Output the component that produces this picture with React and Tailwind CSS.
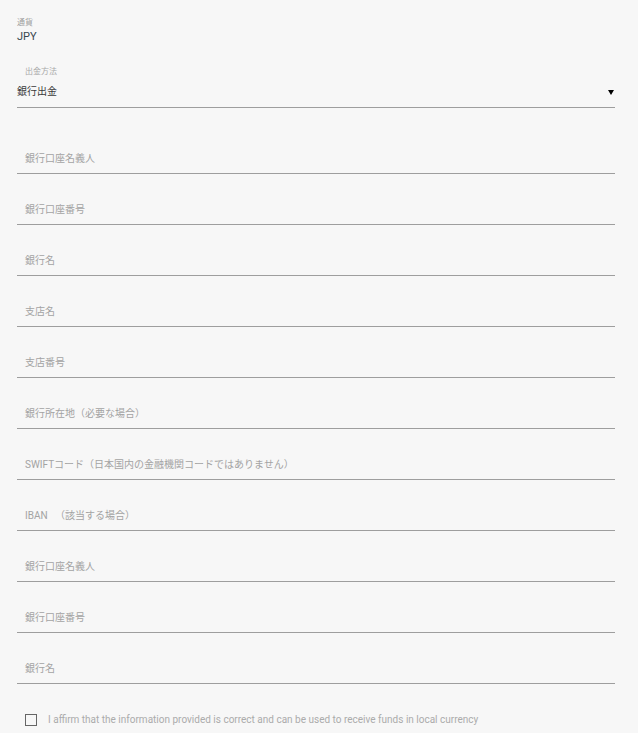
import React from 'react'

const fields = [
  '銀行口座名義人',
  '銀行口座番号',
  '銀行名',
  '支店名',
  '支店番号',
  '銀行所在地（必要な場合）',
  'SWIFTコード（日本国内の金融機関コードではありません）',
  'IBAN 　（該当する場合）',
  '銀行口座名義人',
  '銀行口座番号',
  '銀行名',
]

export default function App() {
  return (
    <div
      className="min-h-[733px] w-[638px] bg-[#f7f7f7] pl-[17px] pt-[17px]"
      style={{ fontFamily: "Roboto, 'Noto Sans CJK JP', sans-serif" }}
    >
      <div className="w-[598px]">
        <div className="text-[8px] leading-[11px] text-[#9e9e9e]">通貨</div>
        <div className="mt-[2px] text-[11px] leading-[14px] text-[#37474f]">JPY</div>

        <div className="mt-[22px] border-b border-[#9e9e9e] pb-[8px]">
          <div className="pl-2 text-[8px] leading-[12px] text-[#a8a8a8]">出金方法</div>
          <div className="mt-[7px] flex items-center justify-between text-[10px] leading-[14px] text-[#3a3a3a]">
            <span>銀行出金</span>
            <span className="mr-[1px] h-0 w-0 border-x-[3px] border-t-[5px] border-x-transparent border-t-black" />
          </div>
        </div>

        <div className="mt-[15px]">
          {fields.map((f, i) => (
            <div key={i} className="flex h-[51px] items-end border-b border-[#9e9e9e] pb-[7px] pl-2">
              <span className="text-[10px] leading-[14px] text-[#a3a3a3]">{f}</span>
            </div>
          ))}
        </div>

        <label className="mt-[29px] flex items-center pl-2">
          <span className="h-[12px] w-[12px] border border-[#666]" />
          <span className="ml-[11px] text-[10px] leading-[14px] text-[#ababab]">
            I affirm that the information provided is correct and can be used to receive funds in local currency
          </span>
        </label>
      </div>
    </div>
  )
}
